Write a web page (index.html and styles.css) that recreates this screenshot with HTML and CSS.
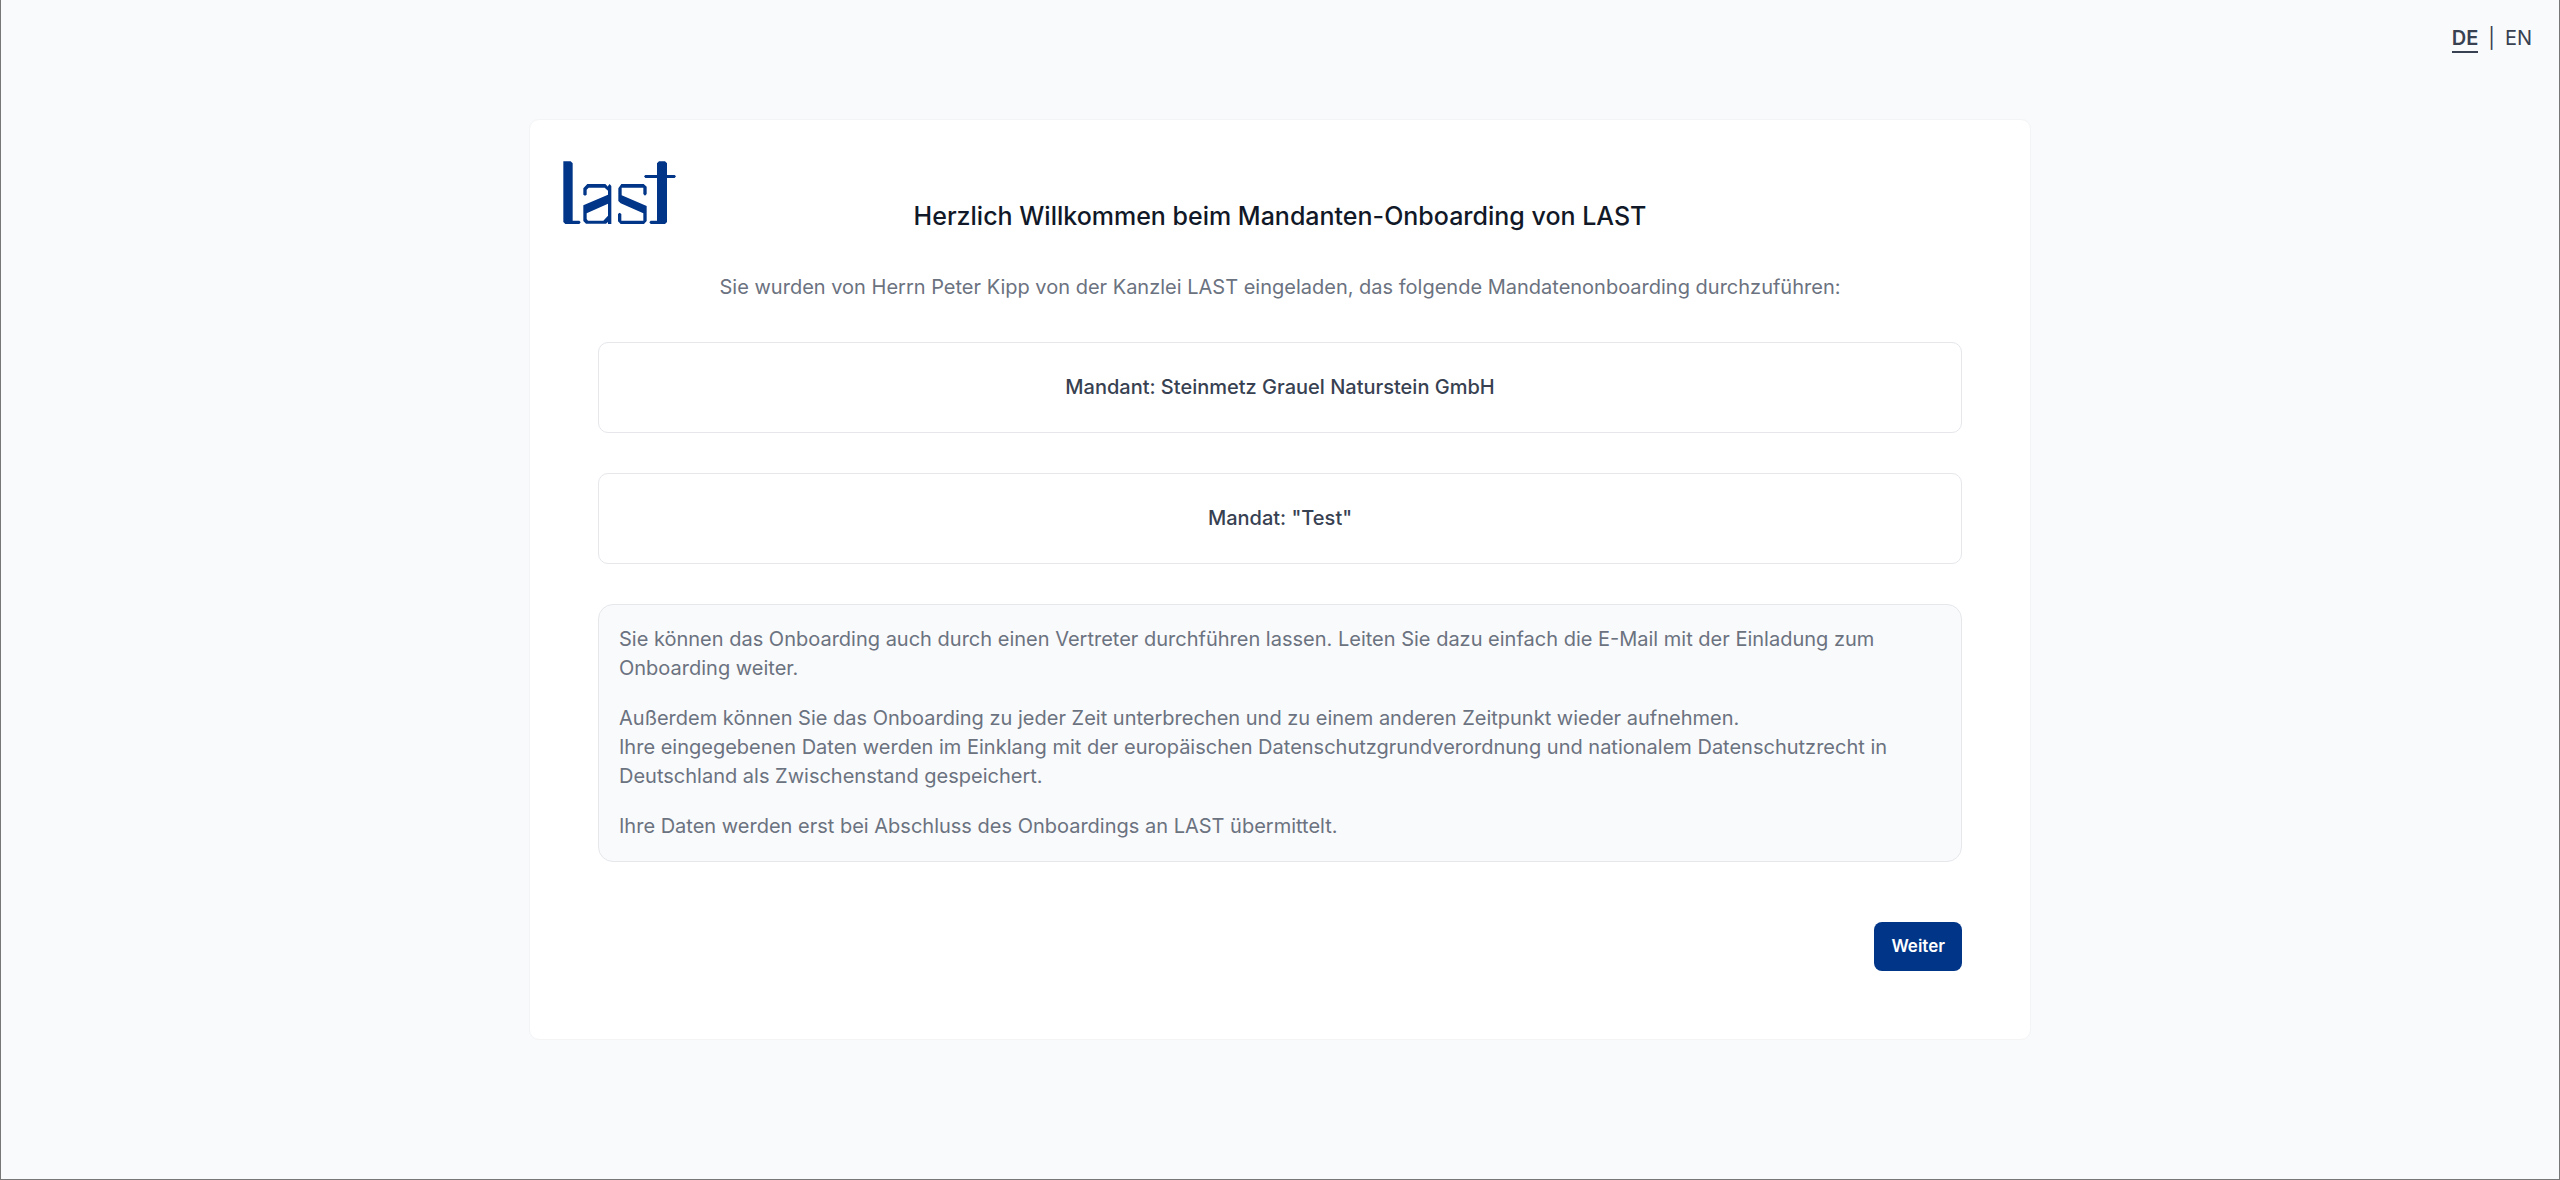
FILE: index.html
```html
<!DOCTYPE html>
<html lang="de">
<head>
    <meta charset="UTF-8">
    <meta name="viewport" content="width=device-width, initial-scale=1.0">
    <title>Mandanten-Onboarding</title>
    <link rel="stylesheet" href="styles.css">
</head>
<body>
    <nav class="languages">
        <a href="#de" class="active">DE</a>
        <span class="divider">|</span>
        <a href="#en">EN</a>
    </nav>

    <main class="card">
        <header class="card-header">
            <svg class="logo" viewBox="129 153 339 189" role="img" aria-label="last">
                <path d="M130 154H152L158 160V332H178L182 337L178 342H136L130 336Z"/>
                <path d="M264 228L269 222L274 228V342H264V336L258 341H198L190 333V286L264 254V242L254 233H206L200 239V254L195 257L190 254V235L202 222H256L264 230ZM264 281L200 310V327L204 332H250L264 317Z" fill-rule="evenodd"/>
                <path d="M295 235L304 222H371L380 230V252L375 257L370 252V233H305V256L380 288V333L372 342H302L294 334V312L299 308L304 312V332H370V310L302 280L295 273Z"/>
                <path d="M411 160L417 154H435L441 160V195H464L468 199L464 204H441V336L435 342H392L388 337L392 332H411V204H376L372 199L376 195H411Z"/>
            </svg>
            <h1>Herzlich Willkommen beim Mandanten-Onboarding von LAST</h1>
        </header>

        <div class="content">
            <p class="intro">Sie wurden von Herrn Peter Kipp von der Kanzlei LAST eingeladen, das folgende Mandatenonboarding durchzuführen:</p>

            <div class="box">Mandant: Steinmetz Grauel Naturstein GmbH</div>
            <div class="box">Mandat: "Test"</div>

            <div class="info">
                <p>Sie können das Onboarding auch durch einen Vertreter durchführen lassen. Leiten Sie dazu einfach die E-Mail mit der Einladung zum Onboarding weiter.</p>
                <p>Außerdem können Sie das Onboarding zu jeder Zeit unterbrechen und zu einem anderen Zeitpunkt wieder aufnehmen.<br>
                Ihre eingegebenen Daten werden im Einklang mit der europäischen Datenschutzgrundverordnung und nationalem Datenschutzrecht in Deutschland als Zwischenstand gespeichert.</p>
                <p>Ihre Daten werden erst bei Abschluss des Onboardings an LAST übermittelt.</p>
            </div>

            <div class="actions">
                <button type="button">Weiter</button>
            </div>
        </div>
    </main>
</body>
</html>
```

FILE: styles.css
```css
* {
    box-sizing: border-box;
}

body {
    font-family: Inter, sans-serif;
    font-size: 20px;
    line-height: 29px;
    color: #374151;
    background: #f9fafb;
    min-height: 100vh;
    margin: 0;
    border: 1px solid #777;
    border-top: none;
}

h1,
p {
    margin: 0;
}

.languages {
    display: flex;
    justify-content: flex-end;
    gap: 10px;
    height: 119px;
    padding: 24px 27px 0;
}

.languages a {
    height: 29px;
    color: inherit;
    text-decoration: none;
}

.languages .active {
    font-weight: 600;
    border-bottom: 2px solid #374151;
}

.card {
    max-width: 1502px;
    margin: 0 auto 40px;
    background: #fff;
    border: 1px solid #f3f4f6;
    border-radius: 10px;
}

.card-header {
    display: grid;
    grid-template-columns: 1fr auto 1fr;
    align-items: start;
    padding: 41px 33px 0;
}

.logo {
    width: 113px;
    height: 63px;
    fill: #003588;
}

h1 {
    padding-top: 37px;
    font-size: 25px;
    font-weight: 500;
    line-height: 36px;
    color: #111827;
}

.content {
    padding: 39px 68px 68px;
    text-align: center;
}

.intro {
    margin-bottom: 40px;
    color: #6b7280;
}

.box {
    margin-bottom: 40px;
    padding: 30px 20px;
    font-weight: 500;
    border: 1px solid #e5e7eb;
    border-radius: 10px;
}

.info {
    padding: 20px;
    text-align: left;
    color: #6b7280;
    background: #f9fafb;
    border: 1px solid #e5e7eb;
    border-radius: 15px;
}

.info p + p {
    margin-top: 21px;
}

.actions {
    margin-top: 60px;
    text-align: right;
}

button {
    display: inline-block;
    padding: 10px 17px;
    font-family: inherit;
    font-size: 17px;
    font-weight: 600;
    line-height: 29px;
    color: #fff;
    background: #003588;
    border: none;
    border-radius: 8px;
    vertical-align: top;
    cursor: pointer;
}

button:hover {
    background: #002a6c;
}
```
